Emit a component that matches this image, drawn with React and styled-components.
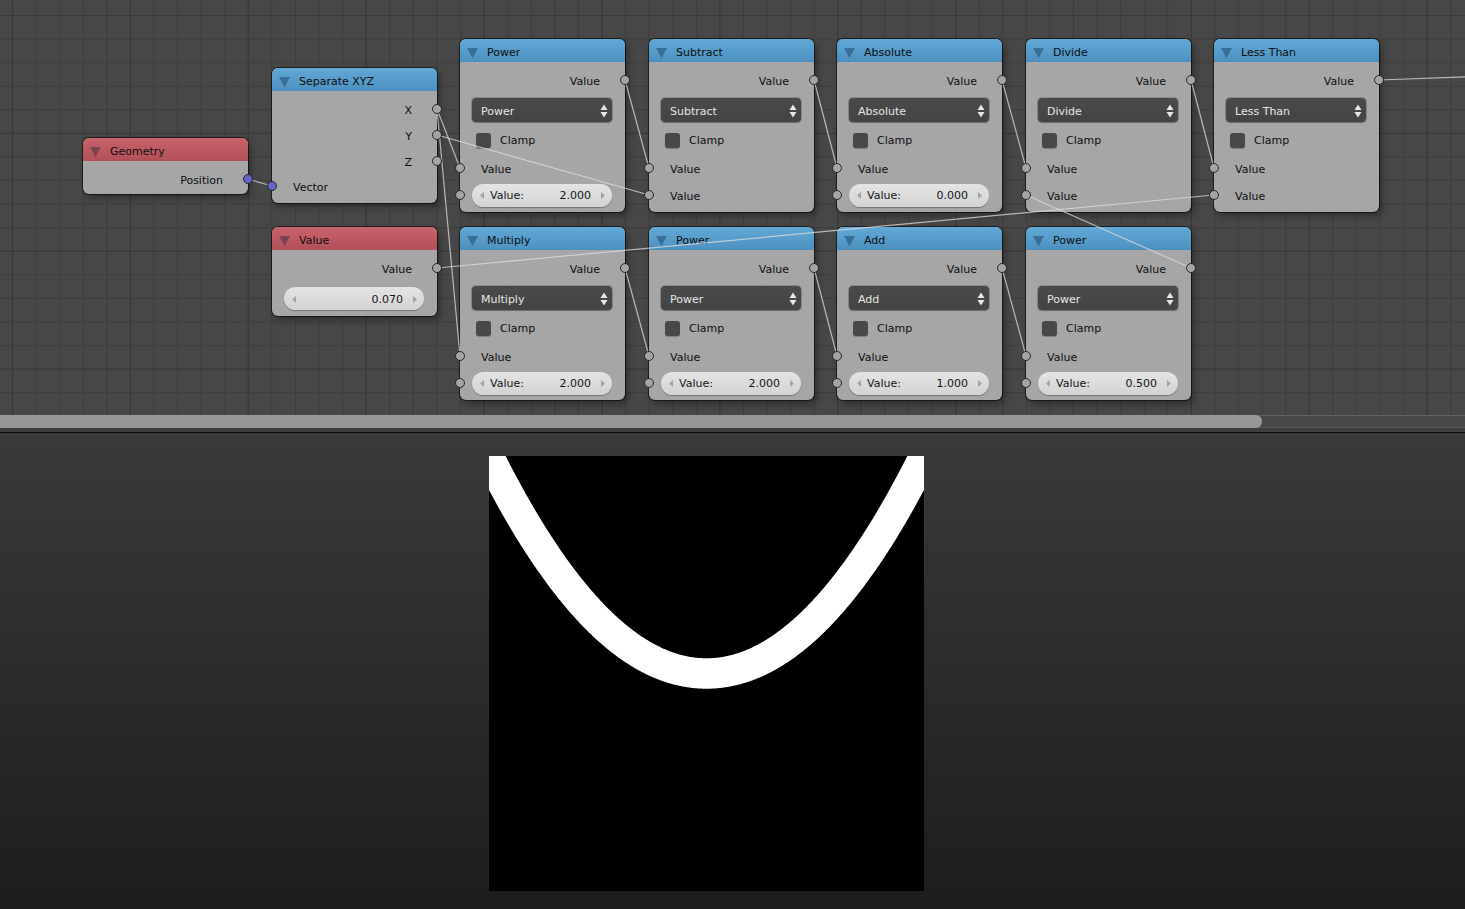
import React from 'react';
import styled, { createGlobalStyle } from 'styled-components';

const NODE_W = 165;
const COLS = [460, 649, 837, 1026, 1214];
const TOP = 39;
const BOT = 227;

// socket centres inside a math node, measured from the node's top
const OUT_Y = 41;
const IN1_Y = 129;
const IN2_Y = 156;

const mathNodes = [
    { x: COLS[0], y: TOP, title: 'Power', field: '2.000' },
    { x: COLS[1], y: TOP, title: 'Subtract' },
    { x: COLS[2], y: TOP, title: 'Absolute', field: '0.000' },
    { x: COLS[3], y: TOP, title: 'Divide' },
    { x: COLS[4], y: TOP, title: 'Less Than' },
    { x: COLS[0], y: BOT, title: 'Multiply', field: '2.000' },
    { x: COLS[1], y: BOT, title: 'Power', field: '2.000' },
    { x: COLS[2], y: BOT, title: 'Add', field: '1.000' },
    { x: COLS[3], y: BOT, title: 'Power', field: '0.500' },
];

const geo = { x: 83, y: 138 };
const sep = { x: 272, y: 68 };
const val = { x: 272, y: 227 };

const out = (n, cy) => [n.x + NODE_W, n.y + cy];
const inp = (n, cy) => [n.x, n.y + cy];
const m = mathNodes;

const links = [
    [out(geo, 41), inp(sep, 118)],
    [out(sep, 41), inp(m[0], IN1_Y)],
    [out(sep, 67), inp(m[1], IN2_Y)],
    [out(sep, 41), inp(m[5], IN1_Y)],
    [out(val, 41), inp(m[4], IN2_Y)],
    [out(m[0], OUT_Y), inp(m[1], IN1_Y)],
    [out(m[1], OUT_Y), inp(m[2], IN1_Y)],
    [out(m[2], OUT_Y), inp(m[3], IN1_Y)],
    [out(m[3], OUT_Y), inp(m[4], IN1_Y)],
    [out(m[4], OUT_Y), [1600, 72]],
    [out(m[5], OUT_Y), inp(m[6], IN1_Y)],
    [out(m[6], OUT_Y), inp(m[7], IN1_Y)],
    [out(m[7], OUT_Y), inp(m[8], IN1_Y)],
    [out(m[8], OUT_Y), inp(m[3], IN2_Y)],
];

// band where |x^2 - y| / sqrt(1 + 4x^2) < 0.07, same as the node tree
const SIZE = 435;
const H = SIZE / 2;
const edge = s => {
    const pts = [];
    for (let x = -1.2; x <= 1.2001; x += 0.005) {
        const y = x * x + s * 0.07 * Math.sqrt(1 + 4 * x * x);
        pts.push(`${((x + 1) * H).toFixed(2)},${((1 - y) * H).toFixed(2)}`);
    }
    return pts;
};
const bandPoints = [...edge(1), ...edge(-1).reverse()].join(' ');

const GlobalStyle = createGlobalStyle`
    html, body {
        margin: 0;
        background: #1e1e1e;
    }
    * {
        box-sizing: border-box;
    }
`;

const Screen = styled.div`
    width: 1465px;
    height: 909px;
    display: flex;
    flex-direction: column;
    overflow: hidden;
    font-family: 'DejaVu Sans', 'Liberation Sans', sans-serif;
    font-size: 11px;
`;

const NodeEditor = styled.div`
    height: 432px;
    display: flex;
    flex-direction: column;
    background: #3e3e3e;
`;

const Canvas = styled.div`
    position: relative;
    flex: 0 0 415px;
    overflow: hidden;
    background-color: #474747;
    background-image:
        linear-gradient(to right, #383838 1px, transparent 1px),
        linear-gradient(to bottom, #383838 1px, transparent 1px),
        linear-gradient(to right, #3d3d3d 1px, transparent 1px),
        linear-gradient(to bottom, #3d3d3d 1px, transparent 1px);
    background-size: 117.9px 100%, 100% 117.9px, 23.58px 100%, 100% 23.58px;
    background-position: 12px 0, 0 15px, 12px 0, 0 15px;
`;

const ScrollTrack = styled.div`
    height: 13px;
    display: flex;
    background: #474747;
    border-top: 1px solid #646464;
    border-bottom: 1px solid #585858;
`;

const ScrollThumb = styled.div`
    width: ${p => p.$w}px;
    background: #979797;
    border-radius: 0 6px 6px 0;
    margin: -1px 0;
`;

const Divider = styled.div`
    height: 1px;
    background: #0a0a0a;
`;

const ImageEditor = styled.div`
    flex: 1;
    background: linear-gradient(180deg, #3a3a3a 0%, #1d1d1d 100%);
    padding: 23px 0 0 489px;
`;

const Preview = styled.svg`
    display: block;
    background: #000;
`;

const Node = styled.div`
    position: absolute;
    left: ${p => p.$x}px;
    top: ${p => p.$y}px;
    width: ${NODE_W}px;
    background: #a6a6a6;
    border-radius: 6px;
    box-shadow: 0 0 0 1px rgba(0, 0, 0, 0.55), 3px 4px 7px rgba(0, 0, 0, 0.35);
    color: #0e0e0e;
`;

const Header = styled.div`
    height: 23px;
    display: flex;
    align-items: center;
    padding: 3px 0 0 7px;
    gap: 9px;
    border-radius: 6px 6px 0 0;
    background: ${p =>
        p.$tone === 'red'
            ? 'linear-gradient(180deg, #c9636c 0%, #b24f58 100%)'
            : 'linear-gradient(180deg, #62a9d8 0%, #4d90bf 100%)'};
    color: #0e0e0e;
`;

const Body = styled.div`
    display: flex;
    flex-direction: column;
    padding: ${p => p.$pt}px 0 ${p => p.$pb}px;
`;

const Row = styled.div`
    position: relative;
    height: ${p => p.$h || 24}px;
    margin-top: ${p => p.$mt || 0}px;
    display: flex;
    align-items: center;
    justify-content: ${p => (p.$out ? 'flex-end' : 'flex-start')};
    padding: 3px 25px 0 21px;
`;

const FieldRow = styled.div`
    position: relative;
    height: ${p => p.$h || 24}px;
    margin-top: ${p => p.$mt || 0}px;
    display: flex;
    align-items: center;
    padding: 0 13px 0 12px;
`;

const Socket = styled.span`
    position: absolute;
    top: 50%;
    margin-top: -5px;
    ${p => (p.$side === 'left' ? 'left: -5px;' : 'right: -5px;')}
    width: 10px;
    height: 10px;
    border-radius: 50%;
    background: ${p => (p.$vector ? '#6464c8' : '#a4a4a4')};
    border: 1px solid #262626;
    z-index: 3;
`;

const Dropdown = styled.div`
    height: 24px;
    margin: 6px 13px 0 12px;
    display: flex;
    align-items: center;
    justify-content: space-between;
    padding: 2px 4px 0 9px;
    background: linear-gradient(180deg, #4a4a4a 0%, #444 100%);
    border-radius: 4px;
    box-shadow: 0 0 0 1px rgba(0, 0, 0, 0.18), 0 1px 1px rgba(0, 0, 0, 0.2);
    color: #e6e6e6;
`;

const CheckRow = styled.div`
    height: 24px;
    margin-top: 6px;
    display: flex;
    align-items: center;
    gap: 9px;
    padding-left: 16px;
`;

const Check = styled.span`
    width: 15px;
    height: 15px;
    border-radius: 3px;
    background: #484848;
    box-shadow: 0 1px 1px rgba(0, 0, 0, 0.25);
`;

const Field = styled.div`
    flex: 1;
    height: 23px;
    display: flex;
    align-items: center;
    padding: 1px 7px 0 8px;
    gap: 6px;
    border-radius: 12px;
    background: linear-gradient(180deg, #e4e4e4 0%, #d3d3d3 100%);
    box-shadow: 0 1px 1px rgba(0, 0, 0, 0.3);
    color: #141414;
`;

const FieldNum = styled.span`
    margin-left: auto;
    margin-right: 4px;
`;

const LinkLayer = styled.svg`
    position: absolute;
    inset: 0;
    width: 100%;
    height: 100%;
    pointer-events: none;
    z-index: 2;
`;

const Caret = () => (
    <svg width="11" height="11" viewBox="0 0 11 11">
        <polygon points="0,1 11,1 5.5,11" fill="rgba(0,25,50,0.35)" />
    </svg>
);

const Spinner = () => (
    <svg width="8" height="16" viewBox="0 0 8 16">
        <polygon points="0.5,7 4,1.5 7.5,7" fill="#e8e8e8" />
        <polygon points="0.5,9 4,14.5 7.5,9" fill="#e8e8e8" />
    </svg>
);

const Arrow = ({ dir }) => (
    <svg width="4" height="7" viewBox="0 0 4 7">
        <polygon points={dir === 'left' ? '4,0 0,3.5 4,7' : '0,0 4,3.5 0,7'} fill="#a2a2a2" />
    </svg>
);

const NumField = ({ label, value }) => (
    <Field>
        <Arrow dir="left" />
        {label && <span>{label}</span>}
        <FieldNum>{value}</FieldNum>
        <Arrow dir="right" />
    </Field>
);

const NodeHeader = ({ tone, title }) => (
    <Header $tone={tone}>
        <Caret />
        <span>{title}</span>
    </Header>
);

const MathNode = ({ x, y, title, field }) => (
    <Node $x={x} $y={y}>
        <NodeHeader tone="blue" title={title} />
        <Body $pt={6} $pb={5}>
            <Row $out>
                Value
                <Socket $side="right" />
            </Row>
            <Dropdown>
                {title}
                <Spinner />
            </Dropdown>
            <CheckRow>
                <Check />
                Clamp
            </CheckRow>
            <Row $mt={4}>
                <Socket $side="left" />
                Value
            </Row>
            {field ? (
                <FieldRow $mt={3}>
                    <Socket $side="left" />
                    <NumField label="Value:" value={field} />
                </FieldRow>
            ) : (
                <Row $mt={3}>
                    <Socket $side="left" />
                    Value
                </Row>
            )}
        </Body>
    </Node>
);

export default function App() {
    return (
        <>
            <GlobalStyle />
            <Screen>
                <NodeEditor>
                    <Canvas>
                        <Node $x={geo.x} $y={geo.y}>
                            <NodeHeader tone="red" title="Geometry" />
                            <Body $pt={6} $pb={3}>
                                <Row $out>
                                    Position
                                    <Socket $side="right" $vector />
                                </Row>
                            </Body>
                        </Node>

                        <Node $x={sep.x} $y={sep.y}>
                            <NodeHeader tone="blue" title="Separate XYZ" />
                            <Body $pt={5} $pb={5}>
                                {['X', 'Y', 'Z'].map(a => (
                                    <Row key={a} $out $h={26}>
                                        {a}
                                        <Socket $side="right" />
                                    </Row>
                                ))}
                                <Row>
                                    <Socket $side="left" $vector />
                                    Vector
                                </Row>
                            </Body>
                        </Node>

                        <Node $x={val.x} $y={val.y}>
                            <NodeHeader tone="red" title="Value" />
                            <Body $pt={6} $pb={6}>
                                <Row $out>
                                    Value
                                    <Socket $side="right" />
                                </Row>
                                <FieldRow $mt={7} $h={23}>
                                    <NumField value="0.070" />
                                </FieldRow>
                            </Body>
                        </Node>

                        {mathNodes.map((n, i) => (
                            <MathNode key={i} {...n} />
                        ))}

                        <LinkLayer>
                            {links.map(([a, b], i) => (
                                <line
                                    key={i}
                                    x1={a[0]}
                                    y1={a[1]}
                                    x2={b[0]}
                                    y2={b[1]}
                                    stroke="rgba(222,222,222,0.75)"
                                    strokeWidth="1.2"
                                />
                            ))}
                        </LinkLayer>
                    </Canvas>
                    <ScrollTrack>
                        <ScrollThumb $w={1262} />
                    </ScrollTrack>
                </NodeEditor>
                <Divider />
                <ImageEditor>
                    <Preview width={SIZE} height={SIZE} viewBox={`0 0 ${SIZE} ${SIZE}`}>
                        <polygon points={bandPoints} fill="#fff" />
                    </Preview>
                </ImageEditor>
            </Screen>
        </>
    );
}
